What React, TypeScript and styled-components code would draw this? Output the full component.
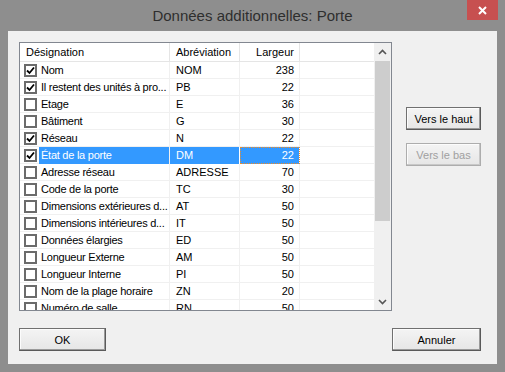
import React from "react";
import styled, { createGlobalStyle } from "styled-components";

const GlobalStyle = createGlobalStyle`
  html, body {
    margin: 0;
    padding: 0;
    background: #8e8e8e;
  }
  body {
    font-family: "Liberation Sans", Arial, sans-serif;
  }
`;

type Item = {
  name: string;
  abbr: string;
  width: number;
  checked: boolean;
};

const items: Item[] = [
  { name: "Nom", abbr: "NOM", width: 238, checked: true },
  { name: "Il restent des unités à pro...", abbr: "PB", width: 22, checked: true },
  { name: "Etage", abbr: "E", width: 36, checked: false },
  { name: "Bâtiment", abbr: "G", width: 30, checked: false },
  { name: "Réseau", abbr: "N", width: 22, checked: true },
  { name: "État de la porte", abbr: "DM", width: 22, checked: true },
  { name: "Adresse réseau", abbr: "ADRESSE", width: 70, checked: false },
  { name: "Code de la porte", abbr: "TC", width: 30, checked: false },
  { name: "Dimensions extérieures d...", abbr: "AT", width: 50, checked: false },
  { name: "Dimensions intérieures d...", abbr: "IT", width: 50, checked: false },
  { name: "Données élargies", abbr: "ED", width: 50, checked: false },
  { name: "Longueur Externe", abbr: "AM", width: 50, checked: false },
  { name: "Longueur Interne", abbr: "PI", width: 50, checked: false },
  { name: "Nom de la plage horaire", abbr: "ZN", width: 20, checked: false },
  { name: "Numéro de salle", abbr: "RN", width: 50, checked: false },
];

const SELECTED = 5;

const App: React.FC = () => {
  return (
    <>
      <GlobalStyle />
      <Window>
        <TitleBar>
          <span />
          <Title>Données additionnelles: Porte</Title>
          <CloseBtn>
            <svg width="11" height="9" viewBox="0 0 11 9">
              <path d="M2 1 L9 8 M9 1 L2 8" stroke="#fff" strokeWidth="2" />
            </svg>
          </CloseBtn>
        </TitleBar>
        <Client>
          <Main>
            <ListView>
              <ListBody>
                <Header>
                  <HeadCell>Désignation</HeadCell>
                  <HeadCell>Abréviation</HeadCell>
                  <HeadCell $right>Largeur</HeadCell>
                  <HeadCell />
                </Header>
                <Rows>
                  {items.map((it, i) => (
                    <Row key={it.abbr}>
                      <NameCell>
                        <Check>
                          {it.checked && (
                            <svg width="9" height="9" viewBox="0 0 9 9">
                              <path d="M1 4.5 L3.5 7 L8 1.5" stroke="#000" strokeWidth="1.8" fill="none" />
                            </svg>
                          )}
                        </Check>
                        <NameText $sel={i === SELECTED}>{it.name}</NameText>
                      </NameCell>
                      <Cell $sel={i === SELECTED}>{it.abbr}</Cell>
                      <Cell $sel={i === SELECTED} $right $focus={i === SELECTED}>
                        {it.width}
                      </Cell>
                      <Cell />
                    </Row>
                  ))}
                </Rows>
              </ListBody>
              <ScrollBar>
                <Arrow>
                  <svg width="9" height="6" viewBox="0 0 9 6">
                    <path d="M1 5 L4.5 1.5 L8 5" stroke="#555" strokeWidth="1.6" fill="none" />
                  </svg>
                </Arrow>
                <Track>
                  <Thumb />
                </Track>
                <Arrow>
                  <svg width="9" height="6" viewBox="0 0 9 6">
                    <path d="M1 1 L4.5 4.5 L8 1" stroke="#555" strokeWidth="1.6" fill="none" />
                  </svg>
                </Arrow>
              </ScrollBar>
            </ListView>
            <Side>
              <Button>Vers le haut</Button>
              <Button disabled>Vers le bas</Button>
            </Side>
          </Main>
          <Footer>
            <Button $w={87}>OK</Button>
            <Button $w={89}>Annuler</Button>
          </Footer>
        </Client>
      </Window>
    </>
  );
};

const Window = styled.div`
  width: 505px;
  height: 372px;
  background: #8e8e8e;
  display: flex;
  flex-direction: column;
  box-sizing: border-box;
`;

const TitleBar = styled.div`
  height: 31px;
  display: grid;
  grid-template-columns: 38px 1fr 38px;
  align-items: start;
`;

const Title = styled.div`
  text-align: center;
  font-size: 15px;
  color: #2e2e2e;
  line-height: 31px;
`;

const CloseBtn = styled.div`
  width: 31px;
  height: 20px;
  background: #c75050;
  display: flex;
  align-items: center;
  justify-content: center;
`;

const Client = styled.div`
  margin: 0 8px 8px 8px;
  flex: 1;
  background: #f0f0f0;
  display: flex;
  flex-direction: column;
  padding: 11px 16px 13px 11px;
  font-size: 11px;
  color: #000;
`;

const Main = styled.div`
  display: flex;
  gap: 14px;
`;

const ListView = styled.div`
  width: 373px;
  height: 269px;
  box-sizing: border-box;
  border: 1px solid #828790;
  background: #fff;
  display: flex;
  overflow: hidden;
`;

const ListBody = styled.div`
  flex: 1;
  display: flex;
  flex-direction: column;
  overflow: hidden;
`;

const columns = "150px 70px 60px 1fr";

const Header = styled.div`
  display: grid;
  grid-template-columns: ${columns};
  height: 18px;
  border-bottom: 1px solid #e5e5e5;
  flex-shrink: 0;
`;

const HeadCell = styled.div<{ $right?: boolean }>`
  border-right: 1px solid #e5e5e5;
  padding: 0 5px 0 6px;
  line-height: 18px;
  text-align: ${(p) => (p.$right ? "right" : "left")};
  white-space: nowrap;
  &:last-child {
    border-right: none;
  }
`;

const Rows = styled.div`
  flex: 1;
  overflow: hidden;
`;

const Row = styled.div`
  display: grid;
  grid-template-columns: ${columns};
  height: 17px;
  border-bottom: 1px solid #f0f0f0;
  box-sizing: border-box;
`;

const NameCell = styled.div`
  display: flex;
  align-items: center;
  border-right: 1px solid #f0f0f0;
  padding-left: 4px;
`;

const Check = styled.div`
  width: 13px;
  height: 13px;
  box-sizing: border-box;
  border: 2px solid #6b6b6b;
  background: #fff;
  display: flex;
  align-items: center;
  justify-content: center;
  flex-shrink: 0;
`;

const NameText = styled.div<{ $sel?: boolean }>`
  flex: 1;
  min-width: 0;
  height: 100%;
  margin-left: 2px;
  padding-left: 2px;
  line-height: 17px;
  letter-spacing: -0.25px;
  white-space: nowrap;
  background: ${(p) => (p.$sel ? "#3399ff" : "transparent")};
  color: ${(p) => (p.$sel ? "#fff" : "#000")};
`;

const Cell = styled.div<{ $sel?: boolean; $right?: boolean; $focus?: boolean }>`
  border-right: 1px solid ${(p) => (p.$sel ? "#fff" : "#f0f0f0")};
  padding: 0 5px 0 6px;
  line-height: 17px;
  white-space: nowrap;
  overflow: hidden;
  box-sizing: border-box;
  text-align: ${(p) => (p.$right ? "right" : "left")};
  background: ${(p) => (p.$sel ? "#3399ff" : "transparent")};
  color: ${(p) => (p.$sel ? "#fff" : "#000")};
  outline: ${(p) => (p.$focus ? "1px dotted #f08a24" : "none")};
  outline-offset: -1px;
  &:last-child {
    border-right: none;
  }
`;

const ScrollBar = styled.div`
  width: 17px;
  background: #f0f0f0;
  display: flex;
  flex-direction: column;
  flex-shrink: 0;
`;

const Arrow = styled.div`
  height: 17px;
  display: flex;
  align-items: center;
  justify-content: center;
`;

const Track = styled.div`
  flex: 1;
  padding: 1px;
`;

const Thumb = styled.div`
  height: 160px;
  background: #cdcdcd;
`;

const Side = styled.div`
  display: flex;
  flex-direction: column;
  gap: 13px;
  padding-top: 65px;
`;

const Button = styled.button<{ $w?: number }>`
  width: ${(p) => p.$w ?? 75}px;
  height: 23px;
  box-sizing: border-box;
  font-family: "Liberation Sans", Arial, sans-serif;
  font-size: 11px;
  color: #000;
  background: linear-gradient(#f4f4f4, #e6e6e6);
  border: 1px solid #707070;
  border-right-color: #5a5a5a;
  border-bottom-color: #5a5a5a;
  box-shadow: inset -1px -1px 0 #9a9a9a, inset 1px 1px 0 #fcfcfc;
  padding: 0;
  &:disabled {
    color: #a0a0a0;
    border-color: #adadad;
    box-shadow: inset -1px -1px 0 #c8c8c8, inset 1px 1px 0 #fcfcfc;
  }
`;

const Footer = styled.div`
  margin-top: 17px;
  display: flex;
  justify-content: space-between;
`;

export default App;
